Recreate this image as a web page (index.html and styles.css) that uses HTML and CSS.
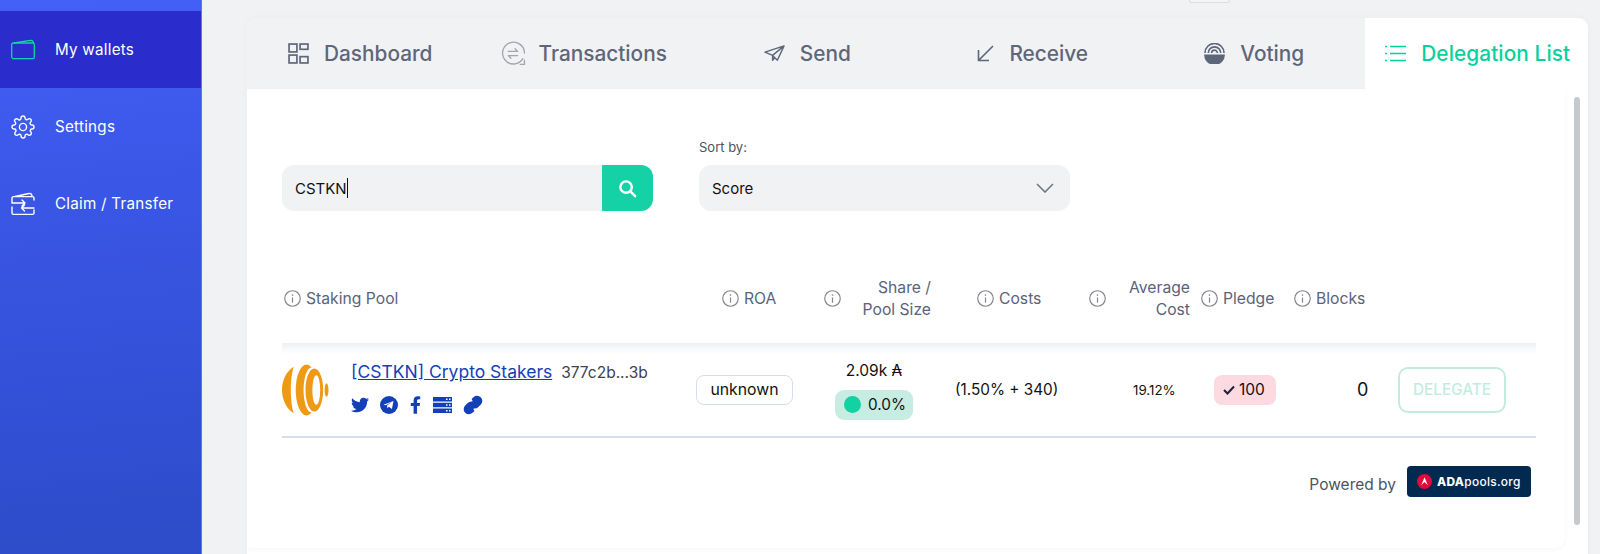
FILE: index.html
```html
<!DOCTYPE html>
<html lang="en">
<head>
<meta charset="utf-8">
<title>Delegation List</title>
<link rel="stylesheet" href="styles.css">
</head>
<body>
<aside class="sidebar">
  <nav class="side-nav">
    <a class="side-item active">
      <svg class="side-icon" viewBox="0 0 24 24" fill="none" stroke="#12d6a3" stroke-width="1.3" stroke-linejoin="round"><rect x="0.7" y="5" width="22.6" height="15.6" rx="1.6"/><path d="M3 5 19.5 2.4q2.6-.3 2.9 2.6"/></svg>
      <span>My wallets</span>
    </a>
    <a class="side-item">
      <svg class="side-icon" viewBox="0 0 24 24" fill="none" stroke="#fff" stroke-width="1.4" stroke-linejoin="round"><circle cx="12" cy="12" r="3.6"/><path d="M19.4 15a1.65 1.65 0 0 0 .33 1.82l.06.06a2 2 0 1 1-2.83 2.83l-.06-.06a1.65 1.65 0 0 0-2.82 1.17V21a2 2 0 1 1-4 0v-.09a1.65 1.65 0 0 0-2.82-1.17l-.06.06a2 2 0 1 1-2.83-2.83l.06-.06A1.65 1.65 0 0 0 3.1 14H3a2 2 0 1 1 0-4h.09a1.65 1.65 0 0 0 1.17-2.82l-.06-.06a2 2 0 1 1 2.83-2.83l.06.06A1.65 1.65 0 0 0 10 3.1V3a2 2 0 1 1 4 0v.09a1.65 1.65 0 0 0 2.82 1.17l.06-.06a2 2 0 1 1 2.83 2.83l-.06.06A1.65 1.65 0 0 0 20.9 10H21a2 2 0 1 1 0 4h-.09a1.65 1.65 0 0 0-1.51 1z"/></svg>
      <span>Settings</span>
    </a>
    <a class="side-item">
      <svg class="side-icon" viewBox="0 0 24 24" fill="none" stroke="#fff" stroke-width="1.4" stroke-linecap="round" stroke-linejoin="round"><path d="M1 11V6q0-1.400 1.500-1.400h19q1.500 0 1.500 1.400v2M1 15v6q0 1.400 1.500 1.400h19q1.500 0 1.500-1.400v-3M4 4.500 18 1.500q3-.4 3 3"/><path d="M1.500 11H14M11 8l3 3-3 3M23 16H10.500M13.500 13l-3 3 3 3"/></svg>
      <span>Claim / Transfer</span>
    </a>
  </nav>
</aside>

<main class="main">
  <div class="top-strip"><span class="top-btn"></span></div>
  <section class="card">
    <div class="tabs">
      <a class="tab">
        <svg class="tab-icon" viewBox="0 0 20 20" fill="none" stroke="currentColor" stroke-width="1.600"><rect x="1" y="1" width="7.500" height="7.500"/><rect x="11.500" y="1" width="7.500" height="5"/><rect x="1" y="11.500" width="7.500" height="7.500"/><rect x="11.500" y="13" width="7.500" height="6"/></svg>
        <span>Dashboard</span>
      </a>
      <a class="tab tab-tight">
        <svg class="tab-icon tab-icon-wide" viewBox="0 0 24 24" fill="none" stroke="#a4a6ad" stroke-width="1.300" stroke-linecap="round" stroke-linejoin="round"><path d="M21 17A10.500 10.500 0 1 1 22.500 11.500"/><path d="M7 10h9l-2.500-2.500M16 14H7l2.500 2.500"/><path d="M22.500 18.500v4h-4"/></svg>
        <span>Transactions</span>
      </a>
      <a class="tab">
        <svg class="tab-icon" viewBox="0 0 22 18" fill="none" stroke="currentColor" stroke-width="1.500" stroke-linejoin="round"><path d="M1 7.500 21 1 14 16 9 11 1 7.500ZM21 1 9 11l0 5 2.500-3"/></svg>
        <span>Send</span>
      </a>
      <a class="tab tab-receive">
        <svg class="tab-icon tab-icon-small" viewBox="0 0 17 17" fill="none" stroke="currentColor" stroke-width="1.600"><path d="M16 1 1.500 15.500M1.500 5v10.500H12"/></svg>
        <span>Receive</span>
      </a>
      <a class="tab">
        <svg class="tab-icon" viewBox="0 0 22 22" fill="none"><path d="M0 12h22a11 11 0 0 1-22 0Z" fill="currentColor"/><path d="M1 10.500a10 10 0 0 1 20 0M4.500 10.500a6.500 6.500 0 0 1 13 0M8 10.500a3 3 0 0 1 6 0" stroke="currentColor" stroke-width="1.700"/></svg>
        <span>Voting</span>
      </a>
      <a class="tab tab-active">
        <svg class="tab-icon" viewBox="0 0 21 18" fill="none" stroke="currentColor" stroke-width="1.500"><path d="M5 2h16M5 9h16M5 16h16M0 2h2M0 9h2M0 16h2"/></svg>
        <span>Delegation List</span>
      </a>
    </div>

    <div class="panel">
      <div class="panel-body">
        <div class="filters">
          <div class="search">
            <span class="search-value">CSTKN<i class="caret"></i></span>
            <button class="search-btn" type="button">
              <svg class="search-icon" viewBox="0 0 20 20" fill="none" stroke="#fff" stroke-width="2.600" stroke-linecap="round"><circle cx="8.500" cy="8.500" r="6"/><path d="m13 13 5 5"/></svg>
            </button>
          </div>
          <div class="sort">
            <label class="sort-label">Sort by:</label>
            <div class="select">
              <span>Score</span>
              <svg class="chevron" viewBox="0 0 18 10" fill="none" stroke="#6f7787" stroke-width="1.600"><path d="m1 1 8 8 8-8"/></svg>
            </div>
          </div>
        </div>

        <div class="grid head">
          <div class="th th-pool"><svg class="info" viewBox="0 0 16 16"><use href="#i"/></svg><span>Staking Pool</span></div>
          <div class="th th-roa"><svg class="info" viewBox="0 0 16 16"><use href="#i"/></svg><span>ROA</span></div>
          <div class="th th-share"><svg class="info" viewBox="0 0 16 16"><use href="#i"/></svg><span class="th-right">Share /<br>Pool Size</span></div>
          <div class="th th-roa"><svg class="info" viewBox="0 0 16 16"><use href="#i"/></svg><span>Costs</span></div>
          <div class="th th-avg"><svg class="info" viewBox="0 0 16 16"><use href="#i"/></svg><span class="th-right">Average<br>Cost</span></div>
          <div class="th th-pledge"><svg class="info" viewBox="0 0 16 16"><use href="#i"/></svg><span>Pledge</span></div>
          <div class="th th-blocks"><svg class="info" viewBox="0 0 16 16"><use href="#i"/></svg><span>Blocks</span></div>
          <div class="th"></div>
        </div>

        <div class="grid row">
          <div class="pool">
            <svg class="logo" viewBox="0 0 48 52">
              <path d="M12 2C3 8 0 18 0 26s3 18 12 24C10 44 9 34 9 26S10 8 12 2Z" fill="#ee9a17"/>
              <ellipse cx="25" cy="26" rx="11" ry="26" fill="#ee9a17"/>
              <ellipse cx="30" cy="26" rx="8" ry="23" fill="#fff"/>
              <ellipse cx="33" cy="26" rx="9" ry="22" fill="#ee9a17"/>
              <ellipse cx="35" cy="26" rx="4" ry="15" fill="#fff"/>
              <ellipse cx="45.500" cy="26" rx="2" ry="7" fill="#ee9a17"/>
            </svg>
            <div class="pool-info">
              <div class="pool-title"><a class="pool-link">[CSTKN] Crypto Stakers</a><span class="pool-hash">377c2b...3b</span></div>
              <div class="socials">
                <svg class="soc soc-tw" viewBox="0 0 512 512"><path d="M459.37 151.716c.325 4.548.325 9.097.325 13.645 0 138.72-105.583 298.558-298.558 298.558-59.452 0-114.68-17.219-161.137-47.106 8.447.974 16.568 1.299 25.34 1.299 49.055 0 94.213-16.568 130.274-44.832-46.132-.975-84.792-31.188-98.112-72.772 6.498.974 12.995 1.624 19.818 1.624 9.421 0 18.843-1.3 27.614-3.573-48.081-9.747-84.143-51.98-84.143-102.985v-1.299c13.969 7.797 30.214 12.67 47.431 13.319-28.264-18.843-46.781-51.005-46.781-87.391 0-19.492 5.197-37.36 14.294-52.954 51.655 63.675 129.3 105.258 216.365 109.807-1.624-7.797-2.599-15.918-2.599-24.04 0-57.828 46.782-104.934 104.934-104.934 30.213 0 57.502 12.67 76.67 33.137 23.715-4.548 46.456-13.32 66.599-25.34-7.798 24.366-24.366 44.833-46.132 57.827 21.117-2.273 41.584-8.122 60.426-16.243-14.292 20.791-32.161 39.308-52.628 54.253z"/></svg>
                <svg class="soc soc-tg" viewBox="0 0 18 18"><circle cx="9" cy="9" r="9"/><path d="M3.500 8.800 13.500 5l-1.600 8-3-2.200-1.500 1.500-.4-2.700 5-3.800-6.200 3.400Z" fill="#fff"/></svg>
                <svg class="soc soc-fb" viewBox="0 0 320 512"><path d="M279.14 288l14.22-92.66h-88.91v-60.13c0-25.35 12.42-50.06 52.24-50.06h40.42V6.26S260.43 0 225.36 0c-73.22 0-121.08 44.38-121.08 124.72v70.62H22.89V288h81.39v224h100.17V288z"/></svg>
                <svg class="soc soc-srv" viewBox="0 0 19 16"><path d="M0 0h19v4.500H0ZM0 5.750h19v4.500H0ZM0 11.500h19V16H0Z"/><path d="M13 1.500h1.500V3H13ZM16 1.500h1.500V3H16ZM13 7.250h1.500v1.500H13ZM16 7.250h1.500v1.500H16ZM13 13h1.500v1.500H13ZM16 13h1.500v1.500H16Z" fill="#fff"/></svg>
                <svg class="soc soc-link" viewBox="0 0 24 24" fill="none" stroke="#1340b8" stroke-width="2.500" stroke-linecap="round" stroke-linejoin="round"><path d="M10 13a5 5 0 0 0 7.540.54l3-3a5 5 0 0 0-7.070-7.070l-1.720 1.710"/><path d="M14 11a5 5 0 0 0-7.540-.54l-3 3a5 5 0 0 0 7.070 7.070l1.710-1.710"/></svg>
              </div>
            </div>
          </div>
          <div class="td td-roa"><span class="tag-unknown">unknown</span></div>
          <div class="td td-share">
            <span class="amount">2.09k ₳</span>
            <span class="chip-share"><i class="dot"></i>0.0%</span>
          </div>
          <div class="td td-costs">(1.50% + 340)</div>
          <div class="td td-avg">19.12%</div>
          <div class="td td-pledge"><span class="chip-pledge"><svg class="check" viewBox="0 0 12 10" fill="none" stroke="#1b2233" stroke-width="2"><path d="m1 5 3.500 3.500L11 1.500"/></svg>100</span></div>
          <div class="td td-blocks">0</div>
          <div class="td td-action"><button class="delegate" type="button">DELEGATE</button></div>
        </div>

        <div class="footer">
          <span class="powered">Powered by</span>
          <span class="badge">
            <svg class="badge-logo" viewBox="0 0 16 16"><circle cx="8" cy="8" r="8" fill="#e8063c"/><path d="M4.500 12 8 3.500 11.500 12 8 8.500Z" fill="#fff"/></svg>
            <span class="badge-text"><b>ADA</b>pools.org</span>
          </span>
        </div>
      </div>
      <div class="scroll"><span class="thumb"></span></div>
    </div>
  </section>
</main>

<svg class="defs" width="0" height="0"><symbol id="i" viewBox="0 0 16 16"><circle cx="8" cy="8" r="7.300" fill="none" stroke="#84868c" stroke-width="1.100"/><path d="M8 7v5" stroke="#84868c" stroke-width="1.100" fill="none"/><circle cx="8" cy="4.700" r=".8" fill="#84868c"/></symbol></svg>
</body>
</html>
```

FILE: styles.css
```css
* { box-sizing: border-box; }
html, body { margin: 0; height: 554px; overflow: hidden; }
body {
  display: flex;
  background: #f1f2f4;
  font-family: Inter, "Noto Sans", sans-serif;
  color: #111;
}
a { text-decoration: none; }
.defs { position: absolute; }

.sidebar {
  width: 202px;
  flex: none;
  padding-top: 11px;
  background: linear-gradient(175deg, #4460f7 0%, #3a56e6 35%, #2c4cc9 100%);
  border-right: 1px solid #5a74fa;
}
.side-nav { display: flex; flex-direction: column; }
.side-item {
  height: 77px;
  display: flex;
  align-items: center;
  gap: 20px;
  padding-left: 11px;
  color: #fff;
  font-size: 15.2px;
  letter-spacing: 0.25px;
}
.side-item.active { background: #2a2ccb; }
.side-icon { width: 24px; height: 24px; flex: none; }

.main { flex: 1; min-width: 0; padding-left: 45px; padding-right: 12px; }
.top-strip { height: 18px; display: flex; justify-content: flex-end; padding-right: 358px; }
.top-btn {
  width: 41px; height: 3px;
  background: #f4f5f6;
  border: 1px solid #dcdee3;
  border-top: 0;
  border-radius: 0 0 6px 6px;
}
.card {
  background: #fff;
  border-radius: 10px;
  height: 560px;
  box-shadow: 0 0 8px rgba(30, 40, 60, 0.03);
  overflow: hidden;
}

.tabs { display: grid; grid-template-columns: repeat(6, 1fr); height: 71px; background: #f1f2f4; }
.tab {
  display: flex;
  align-items: center;
  justify-content: center;
  gap: 15px;
  padding-left: 3px;
  font-size: 20.8px;
  font-weight: 500;
  color: #5e6679;
}
.tab-tight { gap: 13px; }
.tab-receive { padding-left: 7px; }
.tab-active { background: #fff; color: #06d19c; letter-spacing: 0.1px; }
.tab-icon { width: 21px; height: 21px; flex: none; }
.tab-icon-wide { width: 25px; height: 25px; }
.tab-icon-small { width: 17px; height: 17px; }

.panel { display: flex; height: 459px; }
.panel-body {
  width: 1318px;
  height: 459px;
  padding: 48px 29px 0 35px;
  border-radius: 0 0 10px 0;
  background: #fff;
  box-shadow: 0 2px 4px rgba(30, 40, 60, 0.03);
}
.scroll { flex: 1; padding: 8px 8px 23px 9px; }
.thumb { display: block; height: 100%; border-radius: 3px; background: #c6cacc; }

.filters { display: flex; align-items: flex-end; gap: 46px; }
.search, .select {
  height: 46px;
  border-radius: 12px;
  background: #f1f2f4;
  display: flex;
  align-items: center;
  font-size: 15px;
}
.search { width: 371px; overflow: hidden; }
.search-value { flex: 1; padding-left: 13px; display: flex; align-items: center; }
.caret { display: inline-block; width: 1px; height: 20px; background: #111; }
.search-btn {
  width: 51px; height: 46px;
  border: 0; padding: 0;
  background: #14d2a5;
  display: flex; align-items: center; justify-content: center;
}
.search-icon { width: 19px; height: 19px; }
.sort { width: 371px; }
.sort-label { display: block; height: 28px; padding-top: 2px; font-size: 13px; color: #4c5361; }
.select { justify-content: space-between; padding: 0 16px 0 13px; }
.chevron { width: 18px; height: 10px; }

.grid {
  display: grid;
  grid-template-columns: 408px 125px 130px 135px 115px 90px 100px 151px;
  align-items: center;
}
.head { height: 92px; margin-top: 40px; padding-top: 3px; }
.th {
  display: flex;
  align-items: center;
  gap: 5px;
  font-size: 15.7px;
  line-height: 22px;
  color: #5a6379;
}
.info { width: 17px; height: 17px; flex: none; }
.th-right { flex: 1; text-align: right; }
.th-pool { padding-left: 2px; }
.th-roa { padding-left: 32px; }
.th-share { padding-left: 9px; width: 116px; }
.th-avg { padding-left: 9px; width: 110px; }
.th-pledge { padding-left: 6px; }
.th-blocks { padding-left: 9px; }

.row {
  height: 95px;
  border-bottom: 2px solid #d8dcec;
  background: linear-gradient(#eeeff1 0, #f8f9fa 6px, #fff 12px);
}
.pool { display: flex; align-items: center; gap: 22px; }
.logo { width: 47px; height: 52px; flex: none; }
.pool-info { padding-bottom: 3px; }
.pool-title { display: flex; align-items: baseline; gap: 9px; }
.pool-link { color: #1340b8; text-decoration: underline; font-size: 17.5px; }
.pool-hash { font-size: 15.5px; color: #3d4350; }
.socials { display: flex; align-items: center; gap: 11px; margin-top: 13px; }
.soc { fill: #1340b8; height: 18px; flex: none; }
.soc-tw { width: 18px; }
.soc-tg { width: 18px; }
.soc-fb { width: 11px; margin: 0 1px; }
.soc-srv { width: 19px; height: 16px; }
.soc-link { width: 20px; height: 20px; }

.td { font-size: 15.3px; }
.td-roa { padding-left: 6px; }
.tag-unknown {
  display: inline-flex; align-items: center; justify-content: center;
  width: 97px; height: 30px;
  border: 1px solid #d6dcec; border-radius: 8px;
  font-size: 15.8px;
}
.td-share { display: flex; flex-direction: column; align-items: center; gap: 8px; padding-right: 12px; }
.amount { font-size: 15.5px; line-height: 22px; }
.chip-share {
  width: 78px; height: 30px;
  display: flex; align-items: center; gap: 7px; padding-left: 9px;
  background: #c7ece1; border-radius: 9px;
}
.dot { width: 17px; height: 17px; border-radius: 50%; background: #12d1a2; }
.td-costs { padding-left: 10px; }
.td-avg { padding-left: 53px; font-size: 13.3px; }
.td-pledge { padding-left: 19px; }
.chip-pledge {
  display: inline-flex; align-items: center; gap: 4px;
  width: 62px; height: 30px; padding-left: 9px;
  background: #fdd9e1; border-radius: 8px;
  font-size: 15.5px;
}
.check { width: 12px; height: 10px; }
.td-blocks { padding-left: 72px; font-size: 18px; }
.td-action { padding-left: 13px; }
.delegate {
  width: 108px; height: 46px;
  border: 2px solid #c3ece1; border-radius: 10px;
  background: #fff; color: #c3ece1;
  font-family: inherit; font-size: 15.3px; font-weight: 500;
}

.footer { display: flex; justify-content: flex-end; align-items: flex-end; gap: 11px; margin-top: 28px; padding-right: 5px; }
.powered { font-size: 15.5px; color: #4c5361; line-height: 24px; }
.badge {
  width: 124px; height: 31px;
  display: flex; align-items: center; gap: 5px; padding-left: 10px;
  background: #022a50; border-radius: 4px;
  color: #fff; font-size: 11.9px; font-weight: 500; letter-spacing: .3px;
}
.badge b { font-weight: 800; }
.badge-logo { width: 15px; height: 15px; flex: none; }
```
